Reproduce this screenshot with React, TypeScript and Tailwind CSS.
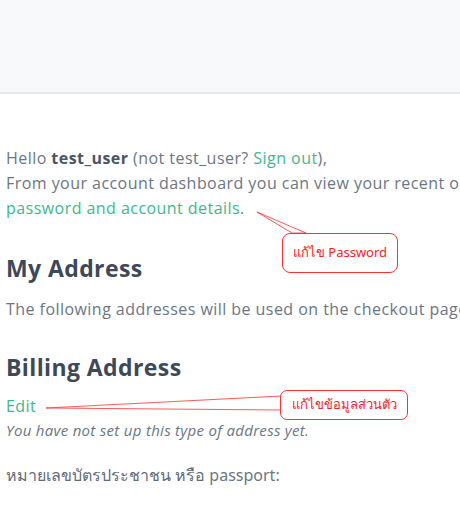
export default function App() {
  return (
    <div className="relative w-[460px] h-[530px] overflow-hidden bg-white" style={{ fontFamily: '"Open Sans", "Noto Sans", sans-serif' }}>
      {/* header band */}
      <div className="h-[94px] bg-[#f8f9fb] border-b-2 border-[#e8eaee]" />

      <div className="pl-[6px] pt-[52px] whitespace-nowrap text-[#6b7685] tracking-[0.45px]">
        <p className="text-[16px] leading-[25px]">
          Hello <strong className="font-bold text-[#4a5565]">test_user</strong> (not test_user? <span className="text-[#3cb98b]">Sign out</span>),
        </p>
        <p className="text-[16px] leading-[25px]">
          From your account dashboard you can view your recent orders, manage your shipping and billing addresses, and edit your
        </p>
        <p className="text-[16px] leading-[25px]">
          <span className="text-[#3cb98b]">password and account details</span>.
        </p>

        <h2 className="mt-[32px] text-[23px] leading-[30px] font-bold text-[#3d4858] tracking-[0.4px]">My Address</h2>
        <p className="mt-[14px] text-[16px] leading-[25px]">The following addresses will be used on the checkout page by default.</p>

        <h2 className="mt-[30px] text-[23px] leading-[30px] font-bold text-[#3d4858] tracking-[0.4px]">Billing Address</h2>
        <p className="mt-[12px] text-[16px] leading-[25px] text-[#3cb98b]">Edit</p>
        <p className="text-[15px] leading-[22px] italic tracking-[0.3px]">You have not set up this type of address yet.</p>

        <p className="mt-[22px] text-[16px] leading-[25px] tracking-normal" style={{ fontFamily: '"Noto Sans", "Open Sans", sans-serif' }}>
          <span className="font-medium text-[#5f6a7a]">หมายเลขบัตรประชาชน หรือ</span> passport:
        </p>
      </div>

      {/* annotation pointers */}
      <svg className="absolute left-0 top-0" width="460" height="530">
        <polygon points="257,212 292,233 306,233" fill="none" stroke="#ff3030" strokeWidth="0.8" />
        <polygon points="46,408 282,396 282,410" fill="none" stroke="#ff3030" strokeWidth="0.8" />
      </svg>

      {/* callout 1 */}
      <div className="absolute left-[282px] top-[233px] w-[116px] h-[40px] rounded-[8px] border border-[#ff3030] bg-white flex items-center justify-center text-[13px] text-[#ff2020]" style={{ fontFamily: '"Noto Sans", sans-serif' }}>
        แก้ไข Password
      </div>

      {/* callout 2 */}
      <div className="absolute left-[280px] top-[390px] w-[128px] h-[30px] rounded-[7px] border border-[#ff3030] bg-white flex items-center justify-center text-[13px] text-[#ff2020]" style={{ fontFamily: '"Noto Sans", sans-serif' }}>
        แก้ไขข้อมูลส่วนตัว
      </div>
    </div>
  )
}
